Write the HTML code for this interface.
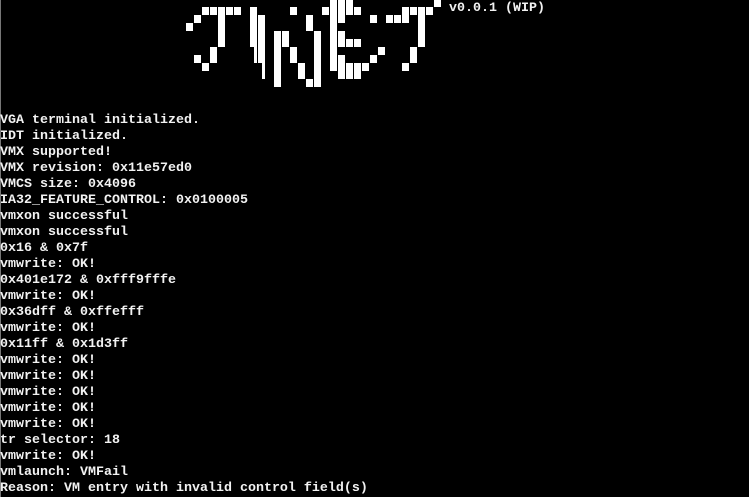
<!DOCTYPE html>
<html><head><meta charset="utf-8"><style>
html,body{margin:0;padding:0;background:#000;width:749px;height:497px;overflow:hidden}
.t{position:absolute;left:0;top:113px;font-family:"Liberation Mono",monospace;font-size:13.33px;line-height:16px;color:#f2f2f2;white-space:pre;font-weight:bold}
.v{position:absolute;left:449px;top:2px;font-family:"Liberation Mono",monospace;font-size:13.33px;line-height:14px;color:#f2f2f2;white-space:pre;font-weight:bold}
.edge{position:absolute;left:0;top:0;width:1px;height:497px;background:#777}
</style></head><body>
<div class="edge"></div>
<div class="v">v0.0.1 (WIP)</div>
<div class="t">VGA terminal initialized.
IDT initialized.
VMX supported!
VMX revision: 0x11e57ed0
VMCS size: 0x4096
IA32_FEATURE_CONTROL: 0x0100005
vmxon successful
vmxon successful
0x16 &amp; 0x7f
vmwrite: OK!
0x401e172 &amp; 0xfff9fffe
vmwrite: OK!
0x36dff &amp; 0xffefff
vmwrite: OK!
0x11ff &amp; 0x1d3ff
vmwrite: OK!
vmwrite: OK!
vmwrite: OK!
vmwrite: OK!
vmwrite: OK!
tr selector: 18
vmwrite: OK!
vmlaunch: VMFail
Reason: VM entry with invalid control field(s)</div>
<svg width="749" height="100" style="position:absolute;left:0;top:0" fill="#fff">
<rect x="186" y="23" width="7" height="8"/>
<rect x="194" y="15" width="7" height="8"/>
<rect x="194" y="55" width="7" height="8"/>
<rect x="202" y="7" width="7" height="8"/>
<rect x="202" y="63" width="7" height="8"/>
<rect x="210" y="7" width="7" height="8"/>
<rect x="210" y="47" width="7" height="16"/>
<rect x="218" y="7" width="7" height="40"/>
<rect x="226" y="7" width="7" height="8"/>
<rect x="234" y="7" width="7" height="8"/>
<rect x="250" y="7" width="7" height="40"/>
<rect x="254" y="47" width="3" height="16"/>
<rect x="258" y="15" width="7" height="48"/>
<rect x="262" y="63" width="3" height="16"/>
<rect x="274" y="31" width="7" height="56"/>
<rect x="282" y="31" width="7" height="16"/>
<rect x="290" y="7" width="7" height="8"/>
<rect x="290" y="47" width="7" height="16"/>
<rect x="298" y="63" width="7" height="16"/>
<rect x="306" y="15" width="7" height="16"/>
<rect x="306" y="79" width="7" height="8"/>
<rect x="314" y="31" width="7" height="56"/>
<rect x="322" y="7" width="7" height="8"/>
<rect x="330" y="0" width="7" height="71"/>
<rect x="338" y="0" width="7" height="23"/>
<rect x="338" y="31" width="7" height="16"/>
<rect x="338" y="55" width="7" height="24"/>
<rect x="346" y="0" width="7" height="15"/>
<rect x="346" y="39" width="7" height="8"/>
<rect x="346" y="63" width="7" height="16"/>
<rect x="354" y="7" width="7" height="8"/>
<rect x="354" y="39" width="7" height="8"/>
<rect x="354" y="63" width="7" height="16"/>
<rect x="362" y="63" width="7" height="8"/>
<rect x="370" y="15" width="7" height="8"/>
<rect x="370" y="55" width="7" height="8"/>
<rect x="378" y="47" width="7" height="8"/>
<rect x="386" y="15" width="7" height="8"/>
<rect x="394" y="15" width="7" height="8"/>
<rect x="402" y="7" width="7" height="16"/>
<rect x="402" y="63" width="7" height="8"/>
<rect x="410" y="7" width="7" height="8"/>
<rect x="410" y="47" width="7" height="16"/>
<rect x="418" y="7" width="7" height="40"/>
<rect x="426" y="7" width="7" height="8"/>
<rect x="434" y="0" width="7" height="7"/>
</svg>
</body></html>
